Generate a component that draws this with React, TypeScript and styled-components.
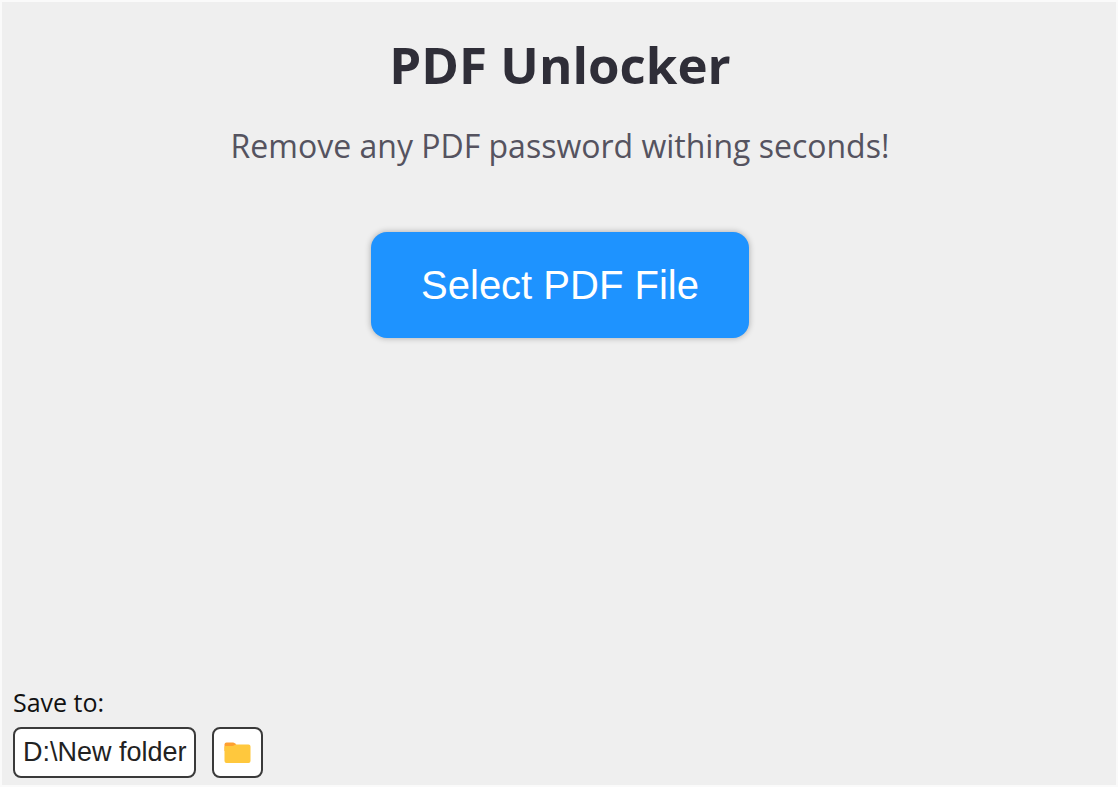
import React, { useState } from "react";
import styled, { createGlobalStyle } from "styled-components";

const GlobalStyle = createGlobalStyle`
  *, *::before, *::after { box-sizing: border-box; }
  body {
    margin: 0;
    background: #efefef;
    font-family: "Segoe UI", "Open Sans", "Noto Sans", sans-serif;
  }
`;

const Window = styled.div`
  display: flex;
  flex-direction: column;
  justify-content: space-between;
  min-height: 100vh;
  padding: 30px 9px 7px 11px;
  border: 2px solid #fafafa;
  background: #efefef;
`;

const Main = styled.main`
  display: flex;
  flex-direction: column;
  align-items: center;
`;

const Title = styled.h1`
  margin: 0;
  color: #2f2e38;
  font-size: 51px;
  line-height: 64px;
  font-weight: 700;
`;

const Subtitle = styled.p`
  margin: 18px 0 0;
  color: #55535f;
  font-size: 32px;
  line-height: 64px;
`;

const SelectButton = styled.button`
  margin-top: 54px;
  padding: 30px 50px;
  border: 0;
  border-radius: 16px;
  background: #1e93ff;
  color: #fff;
  font-family: "Liberation Sans", Arial, sans-serif;
  font-size: 40px;
  line-height: 46px;
  box-shadow: 0 0 6px rgba(0, 0, 0, 0.3);
  cursor: pointer;
`;

const Footer = styled.footer`
  display: flex;
  flex-direction: column;
  align-items: flex-start;
`;

const SaveLabel = styled.label`
  color: #111;
  font-size: 25px;
  line-height: 32px;
  margin-bottom: 9px;
`;

const SaveRow = styled.div`
  display: flex;
  gap: 16px;
`;

const PathInput = styled.input`
  width: 183px;
  height: 51px;
  padding: 0 6px 0 8px;
  border: 2px solid #3a3a3a;
  border-radius: 8px;
  background: #fff;
  color: #222;
  font-family: "Liberation Sans", Arial, sans-serif;
  font-size: 27px;
`;

const FolderButton = styled.button`
  display: flex;
  align-items: center;
  justify-content: center;
  width: 51px;
  height: 51px;
  padding: 0;
  border: 2px solid #3a3a3a;
  border-radius: 8px;
  background: #fff;
  cursor: pointer;
`;

const FolderIcon = () => (
  <svg width="27" height="22" viewBox="0 0 27 22" aria-hidden="true">
    <path d="M2.5 0.5H9Q10 0.5 10.8 1.3L13 3.5V9H0.5V2.5Q0.5 0.5 2.5 0.5Z" fill="#ffa030" />
    <path
      d="M0.5 5.2Q0.5 4 1.7 4H8.5Q9.5 4 10.2 3.3L10.6 3Q11.3 2.4 12.4 2.4H24.5Q26.5 2.4 26.5 4.4V19Q26.5 21 24.5 21H2.5Q0.5 21 0.5 19Z"
      fill="#ffc83d"
    />
  </svg>
);

export default function App() {
  const [path, setPath] = useState("D:\\New folder");
  return (
    <>
      <GlobalStyle />
      <Window>
        <Main>
          <Title>PDF Unlocker</Title>
          <Subtitle>Remove any PDF password withing seconds!</Subtitle>
          <SelectButton type="button">Select PDF File</SelectButton>
        </Main>
        <Footer>
          <SaveLabel htmlFor="save-path">Save to:</SaveLabel>
          <SaveRow>
            <PathInput id="save-path" value={path} onChange={(e) => setPath(e.target.value)} />
            <FolderButton type="button" aria-label="Choose folder">
              <FolderIcon />
            </FolderButton>
          </SaveRow>
        </Footer>
      </Window>
    </>
  );
}
